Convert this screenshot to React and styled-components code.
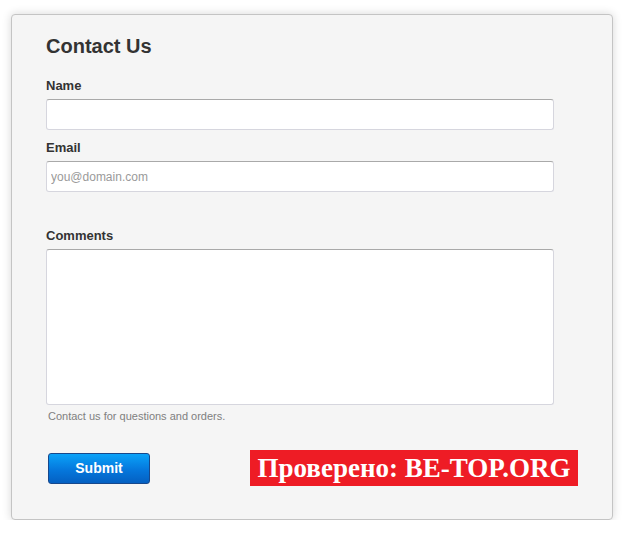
import React from "react";
import styled, { createGlobalStyle } from "styled-components";

const GlobalStyle = createGlobalStyle`
  body {
    margin: 0;
    background: #ffffff;
    font-family: "Liberation Sans", Arial, sans-serif;
  }
`

const Card = styled.div`
  box-sizing: border-box;
  width: 602px;
  height: 506px;
  margin: 14px 0 0 11px;
  padding: 19px 0 0 34px;
  background: #f5f5f5;
  border: 1px solid #c4c4c4;
  border-radius: 4px;
  box-shadow: 0 0 10px rgba(0, 0, 0, 0.16);
`
const Title = styled.h2`
  margin: 0 0 20px 0;
  font-size: 20px;
  line-height: 24px;
  font-weight: bold;
  color: #333;
`
const Label = styled.label`
  display: block;
  margin: ${(p) => p.top || 0}px 0 5px 0;
  font-size: 13px;
  line-height: 16px;
  font-weight: bold;
  color: #333;
`
const Input = styled.input`
  display: block;
  box-sizing: border-box;
  width: 508px;
  height: 31px;
  margin: 0;
  padding: 0 4px;
  background: #fff;
  border: 1px solid #d6d6de;
  border-top-color: #a9a9a9;
  border-radius: 3px;
  font-family: "Liberation Sans", Arial, sans-serif;
  font-size: 12px;
  color: #333;
  outline: none;

  &::placeholder {
    color: #9a9a9a;
  }
`
const TextArea = styled.textarea`
  display: block;
  box-sizing: border-box;
  width: 508px;
  height: 156px;
  margin: 0;
  padding: 4px;
  background: #fff;
  border: 1px solid #d6d6de;
  border-top-color: #a9a9a9;
  border-radius: 3px;
  resize: none;
  outline: none;
`
const Hint = styled.div`
  margin: 4px 0 0 2px;
  font-size: 11px;
  line-height: 14px;
  color: #808080;
`
const Actions = styled.div`
  display: flex;
  align-items: center;
  margin: 27px 0 0 2px;
  gap: 100px;
`
const SubmitBtn = styled.button`
  box-sizing: border-box;
  width: 102px;
  height: 31px;
  padding: 0;
  border: 1px solid #17488c;
  border-radius: 3px;
  background: linear-gradient(#0aa2f8, #0577dc 55%, #0460c2);
  color: #fff;
  font-family: "Liberation Sans", Arial, sans-serif;
  font-size: 14px;
  font-weight: bold;
  cursor: pointer;
`
const Badge = styled.div`
  box-sizing: border-box;
  width: 328px;
  height: 36px;
  display: flex;
  align-items: center;
  justify-content: center;
  background: #ee1c25;
  color: #fff;
  font-family: "Liberation Serif", "Times New Roman", serif;
  font-size: 27px;
  font-weight: bold;
  white-space: nowrap;
`

const App = () => {
    return (
        <>
            <GlobalStyle />
            <Card>
                <Title>Contact Us</Title>
                <Label>Name</Label>
                <Input type="text" />
                <Label top={10}>Email</Label>
                <Input type="text" placeholder="you@domain.com" />
                <Label top={36}>Comments</Label>
                <TextArea />
                <Hint>Contact us for questions and orders.</Hint>
                <Actions>
                    <SubmitBtn>Submit</SubmitBtn>
                    <Badge>Проверено: BE-TOP.ORG</Badge>
                </Actions>
            </Card>
        </>
    )
}

export default App
